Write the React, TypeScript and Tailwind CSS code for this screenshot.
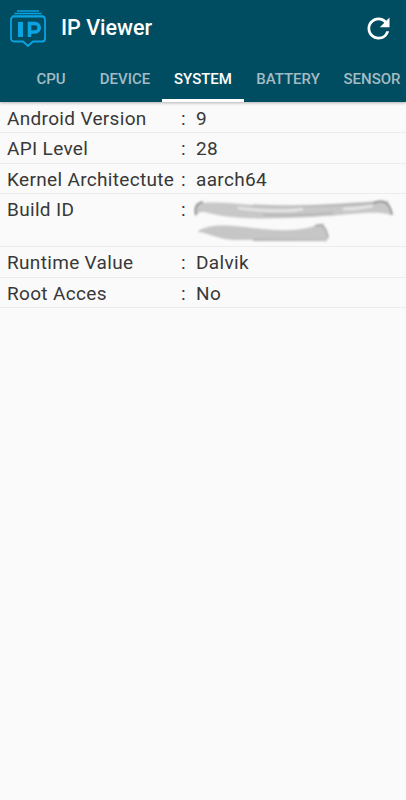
import React from 'react';
import { MdRefresh } from 'react-icons/md';

const tabs = [
  { label: 'CPU', width: 'w-[88px]', pl: 'pl-[14px]' },
  { label: 'DEVICE', width: 'w-[74px]', pl: '' },
  { label: 'SYSTEM', width: 'w-[82px]', pl: '', active: true },
  { label: 'BATTERY', width: 'w-[88px]', pl: '' },
  { label: 'SENSOR', width: 'w-[80px]', pl: '' },
];

const Logo = () => (
  <svg width="36" height="37" viewBox="0 0 36 37" fill="none" stroke="#0ba3e2">
    <path d="M7 1h22M4.5 3.5h27" strokeWidth="1.4" />
    <path d="M2.5 6h31" strokeWidth="1.2" />
    <path d="M4 6.5h28a3 3 0 0 1 3 3v19a3 3 0 0 1-3 3h-9l-5 4.5-5-4.5H4a3 3 0 0 1-3-3v-19a3 3 0 0 1 3-3z" strokeWidth="1.8" />
    <path d="M10.5 12v15" strokeWidth="5" />
    <path d="M19.5 27V13.5h5.5a4 4 0 0 1 0 8.5h-5.5" strokeWidth="3.6" />
  </svg>
);

const Smudge = () => (
  <svg width="204" height="50" viewBox="0 0 204 50" className="-ml-[3px] block">
    <defs>
      <filter id="smudge-blur">
        <feGaussianBlur stdDeviation="1.1" />
      </filter>
    </defs>
    <g filter="url(#smudge-blur)">
      <path d="M3 10C20 6 50 11 80 12S160 8 195 7L199 21C180 16 160 21 120 23S50 25 30 22 8 15 3 22Z" fill="#c8c8c8" />
      <path d="M45 14c20 3 50 4 65 1M150 15c12 0 20-1 30-3" fill="none" stroke="#e8e8e8" strokeWidth="2.5" />
      <path d="M60 11c30 2 80 1 120-2M70 21c20 1 50 0 70-2" fill="none" stroke="#a4a4a4" strokeWidth="1" />
      <path d="M3 21C1 13 4 9 10 8M180 9c10-4 17-1 19 12" fill="none" stroke="#858585" strokeWidth="1.7" />
      <path d="M5 37C20 28 40 32 70 35S115 35 130 29L136 45 40 46C25 45 15 39 5 38Z" fill="#c6c6c6" />
      <path d="M122 32c6-3 11 0 13 11" fill="none" stroke="#a0a0a0" strokeWidth="1.5" />
      <path d="M60 46h74" fill="none" stroke="#7c7c7c" strokeWidth="1.2" />
    </g>
  </svg>
);

const Row = ({ label, value, h = 'h-[30.4px]' }: { label: string; value?: string; h?: string }) => (
  <div className={`flex ${h} border-b border-[#ececec] text-[19px] leading-[32px] tracking-[0.33px] text-[#383838]`}>
    <div className="w-[181px] pl-[7px] whitespace-nowrap">{label}</div>
    <div className="w-[15px]">:</div>
    {value ? <div>{value}</div> : <Smudge />}
  </div>
);

export default function App() {
  return (
    <div className="flex h-[800px] w-[406px] flex-col overflow-hidden bg-[#fafafa] font-['Roboto',sans-serif]">
      <header className="h-[102px] shrink-0 bg-[#004d61] shadow-[0_1px_3px_rgba(0,0,0,0.3)]">
        <div className="flex h-[56px] items-center pl-[10px] pr-[11px]">
          <Logo />
          <span className="ml-[15px] text-[21.5px] font-medium text-white">IP Viewer</span>
          <MdRefresh className="ml-auto text-white" size={33} />
        </div>
        <nav className="flex h-[46px]">
          {tabs.map((t) => (
            <div
              key={t.label}
              className={`flex shrink-0 items-center justify-center ${t.width} ${t.pl} text-[15px] font-medium ${
                t.active ? 'border-b-[3px] border-white pt-[3px] text-white' : 'text-[#a3bcc4]'
              }`}
            >
              {t.label}
            </div>
          ))}
        </nav>
      </header>
      <main className="pt-px">
        <Row label="Android Version" value="9" />
        <Row label="API Level" value="28" />
        <Row label="Kernel Architectute" value="aarch64" />
        <Row label="Build ID" h="h-[53px]" />
        <Row label="Runtime Value" value="Dalvik" />
        <Row label="Root Acces" value="No" />
      </main>
    </div>
  );
}
